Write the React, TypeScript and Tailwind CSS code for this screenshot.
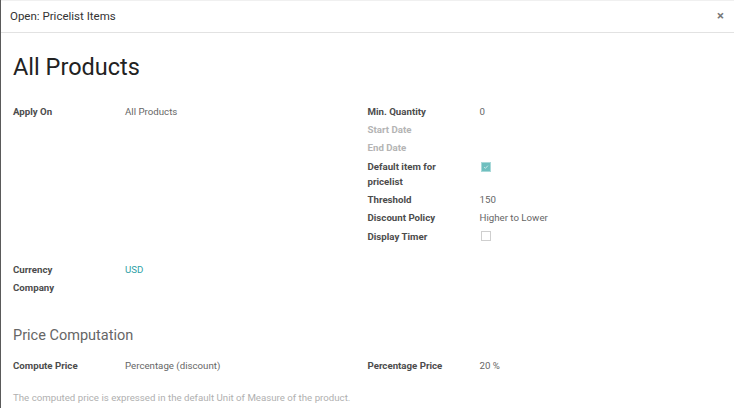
import type { ReactNode } from 'react';

type Field = {
  label: string;
  value?: ReactNode;
  muted?: boolean;
  tall?: boolean;
};

function FieldRow({ label, value, muted, tall }: Field) {
  return (
    <div className={'flex pb-[3px] ' + (tall ? 'pt-[1px]' : '')}>
      <div
        className={
          'w-[112px] shrink-0 pr-2 leading-[15px] font-bold ' +
          (muted ? 'text-[#b4b4b4]' : 'text-[#4c4c4c]')
        }
      >
        {label}
      </div>
      <div className="flex-1 leading-[15px] text-[#666]">{value}</div>
    </div>
  );
}

function Checkbox({ checked }: { checked?: boolean }) {
  if (checked) {
    return (
      <span className="mt-[2px] ml-[2px] inline-flex h-[8px] w-[8px] items-center justify-center bg-[#6fbfbf] ring-1 ring-[#a9d9d9]">
        <svg viewBox="0 0 8 8" className="h-[6px] w-[6px]">
          <path d="M1.5 4.2 L3.2 5.8 L6.5 2.2" fill="none" stroke="#e8f6f6" strokeWidth="1" />
        </svg>
      </span>
    );
  }
  return <span className="mt-[2px] ml-[1px] inline-block h-[10px] w-[10px] border border-[#cfcfcf] bg-white" />;
}

export default function App() {
  return (
    <div
      className="h-[408px] w-[734px] overflow-hidden border-l border-[#5a5a5a] bg-white text-[9.7px]"
      style={{ fontFamily: 'Roboto, "Liberation Sans", sans-serif' }}
    >
      <div className="flex h-[33px] items-center justify-between border-t border-b border-t-[#f0f0f0] border-b-[#e2e2e2] pl-[9px] pr-[10px]">
        <span className="text-[11.5px] text-[#333]">Open: Pricelist Items</span>
        <span className="-mt-[3px] text-[13px] font-bold leading-none text-[#777]">×</span>
      </div>

      <div className="px-[12px]">
        <h1 className="mt-[19px] text-[23.5px] leading-[30px] text-[#222]">All Products</h1>

        <div className="mt-[22px] grid grid-cols-2">
          <div>
            <FieldRow label="Apply On" value="All Products" />
          </div>
          <div>
            <FieldRow label="Min. Quantity" value="0" />
            <FieldRow label="Start Date" muted />
            <FieldRow label="End Date" muted />
            <FieldRow label="Default item for pricelist" value={<Checkbox checked />} tall />
            <FieldRow label="Threshold" value="150" />
            <FieldRow label="Discount Policy" value="Higher to Lower" />
            <FieldRow label="Display Timer" value={<Checkbox />} tall />
          </div>
        </div>

        <div className="mt-[14px]">
          <FieldRow label="Currency" value={<span className="text-[#2f9fa6]">USD</span>} />
          <FieldRow label="Company" />
        </div>

        <h2 className="mt-[28px] text-[14.5px] leading-[20px] text-[#666]">Price Computation</h2>

        <div className="mt-[12px] grid grid-cols-2">
          <FieldRow label="Compute Price" value="Percentage (discount)" />
          <FieldRow label="Percentage Price" value="20 %" />
        </div>

        <p className="mt-[14px] leading-[15px] text-[#b0b0b0]">
          The computed price is expressed in the default Unit of Measure of the product.
        </p>
      </div>
    </div>
  );
}
